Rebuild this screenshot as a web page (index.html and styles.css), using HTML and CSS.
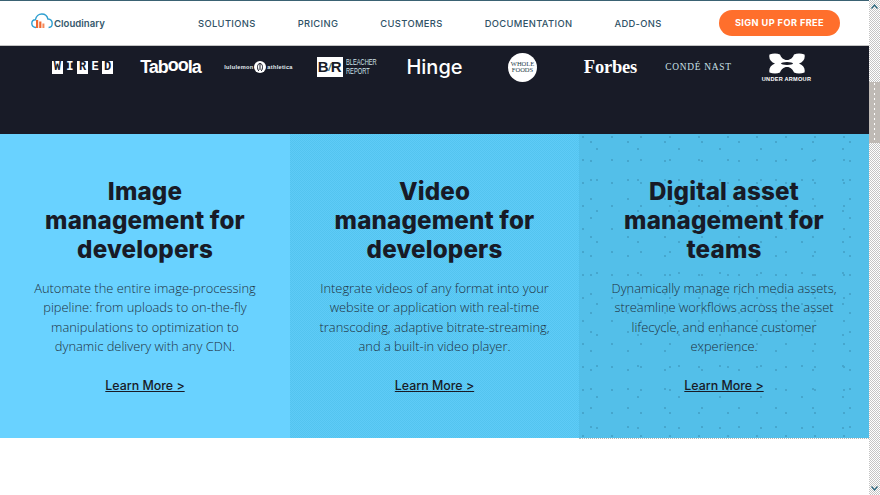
FILE: index.html
```html
<!DOCTYPE html>
<html lang="en">
<head>
    <meta charset="UTF-8">
    <title>Cloudinary</title>
    <link rel="stylesheet" href="styles.css">
</head>
<body>
    <div class="page">
        <header class="topbar">
            <a class="brand" href="#">
                <svg class="brand-icon" viewBox="0 0 22 16" width="22" height="16">
                    <path d="M5 14.5C2.2 14.5 .8 12.6 .8 10.6C.8 8.4 2.4 6.9 4.4 6.8C5 3.3 7.8 1 10.8 1C13.8 1 16.2 3 16.9 6C19.4 6.1 21.2 8 21.2 10.4C21.2 12.6 19.6 14.3 17.6 14.5" fill="none" stroke="#2f9fd0" stroke-width="1.4"/>
                    <rect x="5" y="7" width="2.2" height="8" fill="#f0682f"/>
                    <rect x="8.2" y="8.5" width="2.2" height="6.5" fill="#f0682f"/>
                    <rect x="11.4" y="10.5" width="2" height="4.5" fill="#f58a5a"/>
                </svg>
                <span class="brand-name">Cloudinary</span>
            </a>
            <nav class="mainnav">
                <a href="#">Solutions</a>
                <a href="#">Pricing</a>
                <a href="#">Customers</a>
                <a href="#">Documentation</a>
                <a href="#">Add-ons</a>
            </nav>
            <a class="signup" href="#">Sign up for free</a>
        </header>

        <section class="logos">
            <div class="logo wired"><b>W</b><i>I</i><b>R</b><i>E</i><b>D</b></div>
            <div class="logo taboola">Tab<span>oo</span>la</div>
            <div class="logo lulu">
                <span>lululemon</span>
                <svg viewBox="0 0 12 12" width="12" height="12">
                    <circle cx="6" cy="6" r="6" fill="#fff"/>
                    <path d="M4.8 10C3 8 2.8 2.5 6 2.5C9.2 2.5 9 8 7.2 10M6 3V9" fill="none" stroke="#181b27" stroke-width="1"/>
                </svg>
                <span>athletica</span>
            </div>
            <div class="logo bleacher">
                <span class="br-box">B<em>/</em>R</span>
                <span class="br-name">Bleacher<br>Report</span>
            </div>
            <div class="logo hinge">Hinge</div>
            <div class="logo wholefoods"><span>Whole<br>Foods</span></div>
            <div class="logo forbes">Forbes</div>
            <div class="logo conde">Condé Nast</div>
            <div class="logo armour">
                <svg viewBox="0 0 36 21" width="36" height="21">
                    <path d="M.5 1.5C4 .2 8 .2 11 1.5C12 4.5 14.5 7 18 7C21.5 7 24 4.5 25 1.5C28 .2 32 .2 35.5 1.5C36.5 6 34 9 30 10.5C34 12 36.5 15 35.5 19.5C32 20.8 28 20.8 25 19.5C24 16.5 21.5 14 18 14C14.5 14 12 16.5 11 19.5C8 20.8 4 20.8 .5 19.5C-.5 15 2 12 6 10.5C2 9 -.5 6 .5 1.5Z" fill="#fff"/>
                    <ellipse cx="18" cy="10.5" rx="6" ry="1.5" fill="#181b27"/>
                </svg>
                <span>Under Armour</span>
            </div>
        </section>

        <section class="cards">
            <article class="card card-image">
                <h2>Image<br>management for<br>developers</h2>
                <p>Automate the entire image-processing<br>pipeline: from uploads to on-the-fly<br>manipulations to optimization to<br>dynamic delivery with any CDN.</p>
                <a href="#">Learn More &gt;</a>
            </article>
            <article class="card card-video">
                <h2>Video<br>management for<br>developers</h2>
                <p>Integrate videos of any format into your<br>website or application with real-time<br>transcoding, adaptive bitrate-streaming,<br>and a built-in video player.</p>
                <a href="#">Learn More &gt;</a>
            </article>
            <article class="card card-dam">
                <h2>Digital asset<br>management for<br>teams</h2>
                <p>Dynamically manage rich media assets,<br>streamline workflows across the asset<br>lifecycle, and enhance customer<br>experience.</p>
                <a href="#">Learn More &gt;</a>
            </article>
        </section>
        <div class="cards-end"></div>
    </div>

    <div class="scrollbar">
        <svg viewBox="0 0 7 5" width="7" height="5"><path d="M.5 4.5L3.5 1L6.5 4.5" fill="none" stroke="#2f6a80" stroke-width="1.2"/></svg>
        <div class="thumb"></div>
        <svg viewBox="0 0 7 5" width="7" height="5"><path d="M.5 .5L3.5 4L6.5 .5" fill="none" stroke="#2f6a80" stroke-width="1.2"/></svg>
    </div>
</body>
</html>
```

FILE: styles.css
```css
body {
    margin: 0;
    height: 495px;
    overflow: hidden;
    display: flex;
    background: #fff;
    font-family: "Open Sans", sans-serif;
    color: #181b27;
}

a {
    color: inherit;
    text-decoration: none;
}

.page {
    width: 869px;
}

/* top navigation */
.topbar {
    height: 44px;
    border-top: 1px solid #3a6273;
    border-bottom: 1px solid #c4c4c4;
    display: flex;
    align-items: center;
    padding-left: 31px;
    padding-right: 29px;
}

.brand {
    width: 73px;
    display: flex;
    align-items: center;
    gap: 1px;
}

.brand-icon {
    flex: none;
    margin-top: -5px;
}

.brand-name {
    font-family: "Inter", sans-serif;
    font-size: 9.6px;
    font-weight: 600;
    color: #34586b;
}

.mainnav {
    margin-left: 94px;
    display: flex;
    gap: 42px;
    font-family: "Inter", sans-serif;
    font-size: 9.4px;
    font-weight: 500;
    letter-spacing: 0.35px;
    text-transform: uppercase;
    color: #2f5266;
}

.signup {
    margin-left: auto;
    width: 121px;
    height: 26px;
    line-height: 26px;
    margin-top: -1px;
    border-radius: 13px;
    background: #ff6f2c;
    color: #fff;
    text-align: center;
    text-transform: uppercase;
    font-family: "Inter", sans-serif;
    font-size: 9.2px;
    font-weight: 700;
    letter-spacing: 0.4px;
}

/* customer logos */
.logos {
    height: 88px;
    background: #181b27;
    display: grid;
    grid-template-columns: repeat(9, 88px);
    justify-content: center;
    align-items: start;
    color: #fff;
}

.logo {
    height: 42px;
    display: flex;
    align-items: center;
    justify-content: center;
}

.wired {
    font-family: "Liberation Mono", monospace;
    font-size: 12px;
    font-weight: 700;
    gap: 1px;
}

.wired b,
.wired i {
    width: 11.6px;
    height: 13px;
    line-height: 13px;
    text-align: center;
    font-style: normal;
}

.wired b {
    background: #fff;
    color: #181b27;
}

.taboola {
    font-family: "Liberation Sans", sans-serif;
    font-size: 18px;
    font-weight: 700;
    letter-spacing: -1px;
}

.taboola span {
    position: relative;
    top: -2px;
}

.lulu {
    font-family: "Liberation Sans", sans-serif;
    font-size: 5.6px;
    font-weight: 700;
    gap: 1px;
    letter-spacing: 0.3px;
    color: #e4edf1;
}

.bleacher {
    gap: 3px;
    justify-content: flex-start;
    padding-left: 14px;
}

.br-box {
    width: 26px;
    height: 20px;
    line-height: 20px;
    background: #fff;
    color: #181b27;
    text-align: center;
    font-family: "Liberation Sans", sans-serif;
    font-size: 15px;
    font-weight: 700;
    letter-spacing: -0.3px;
}

.br-box em {
    font-size: 10px;
    color: #2f6a80;
    vertical-align: 1px;
}

.br-name {
    width: 31px;
    white-space: nowrap;
    font-family: "Liberation Sans", sans-serif;
    font-size: 8.4px;
    line-height: 8.8px;
    text-transform: uppercase;
    color: #cfe3ea;
    transform: scaleX(0.68);
    transform-origin: left center;
}

.hinge {
    font-family: "Inter", sans-serif;
    font-size: 20px;
    font-weight: 500;
}

.wholefoods span {
    width: 29px;
    height: 29px;
    border-radius: 50%;
    background: #fff;
    color: #1d3c4a;
    display: flex;
    align-items: center;
    justify-content: center;
    text-align: center;
    text-transform: uppercase;
    font-family: "Liberation Serif", serif;
    font-size: 6.5px;
    line-height: 6.5px;
}

.forbes {
    font-family: "Liberation Serif", serif;
    font-size: 18.5px;
    font-weight: 700;
    letter-spacing: -0.2px;
}

.conde {
    font-family: "Liberation Serif", serif;
    font-size: 9.4px;
    letter-spacing: 0.75px;
    text-transform: uppercase;
    color: #c9e0e8;
}

.armour {
    flex-direction: column;
    margin-top: 7px;
    height: auto;
    gap: 2px;
    font-family: "Liberation Sans", sans-serif;
    font-size: 5.6px;
    font-weight: 700;
    letter-spacing: 0.25px;
    text-transform: uppercase;
}

/* product cards */
.cards {
    display: grid;
    grid-template-columns: 290px 289px 290px;
    height: 304px;
}

.card {
    padding-top: 43px;
    text-align: center;
}

.card-image {
    background: #69d2ff;
}

.card-video {
    background-color: #55c6f2;
    background-image: repeating-conic-gradient(#5fcbf7 0 25%, #53c4ef 0 50%);
    background-size: 2px 2px;
}

.card-dam {
    background-color: #53bfe9;
    background-image:
        radial-gradient(circle at 1px 1px, #45a5cc 0.7px, transparent 0.8px),
        radial-gradient(circle at 1px 1px, #45a5cc 0.7px, transparent 0.8px),
        radial-gradient(circle at 1px 1px, #45a5cc 0.7px, transparent 0.8px);
    background-size: 29px 23px, 37px 19px, 41px 31px;
    background-position: 3px 2px, 11px 7px, 17px 14px;
}

.card h2 {
    margin: 0;
    font-family: "Inter", sans-serif;
    font-size: 24.2px;
    font-weight: 800;
    line-height: 29px;
    letter-spacing: 0.15px;
}

.card p {
    margin: 15px 0 0;
    font-size: 12.9px;
    font-weight: 300;
    line-height: 19.3px;
    color: #1e3040;
}

.card a {
    display: inline-block;
    margin-top: 22px;
    font-family: "Inter", sans-serif;
    font-size: 12.4px;
    font-weight: 500;
    text-decoration: underline;
}

.cards-end {
    margin-left: 579px;
    border-top: 1px dotted #b5b5b5;
}

/* dithered window scrollbar */
.scrollbar {
    width: 11px;
    height: 495px;
    display: flex;
    flex-direction: column;
    align-items: center;
    padding-top: 4px;
    padding-bottom: 4px;
    box-sizing: border-box;
    background-image: repeating-conic-gradient(#c4c4c4 0 25%, #fff 0 50%);
    background-size: 2px 2px;
}

.thumb {
    align-self: stretch;
    margin-top: 73px;
    margin-bottom: auto;
    height: 61px;
    background-color: #bfbab5;
    background-image: radial-gradient(circle at 5.5px 2px, #fff 0.8px, transparent 1px);
    background-size: 11px 5px;
}
```
